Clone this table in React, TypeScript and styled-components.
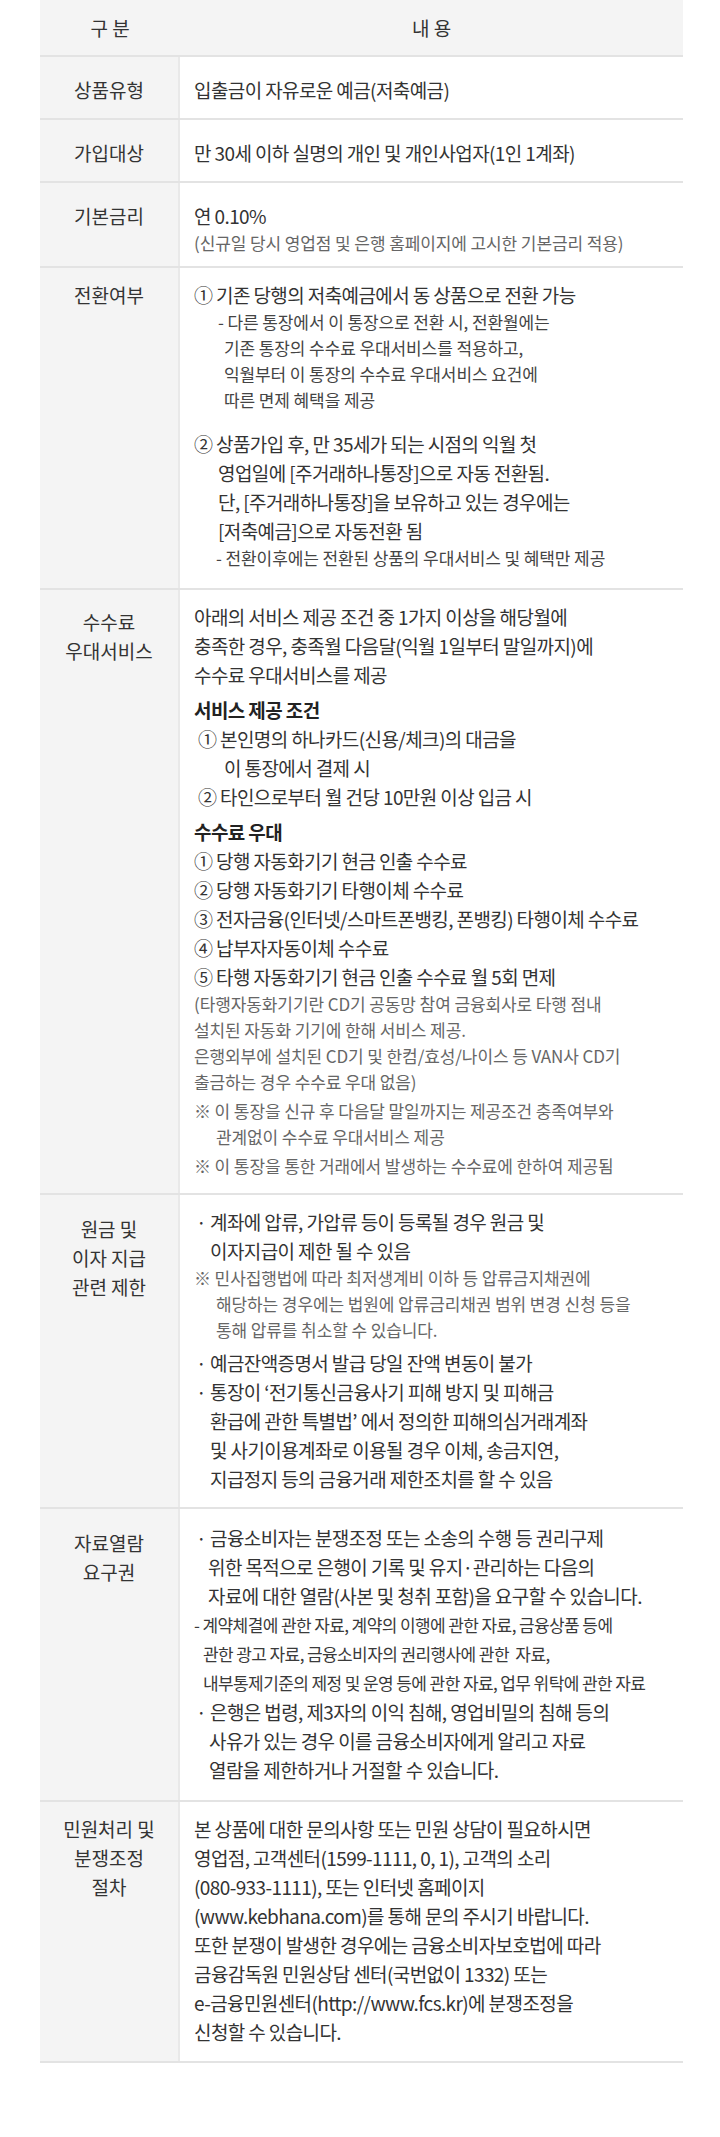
import React from 'react'
import styled, { createGlobalStyle } from 'styled-components'

const GlobalStyle = createGlobalStyle`
  html, body {
    margin: 0;
    padding: 0;
    background: #fff;
  }
  body {
    font-family: 'Noto Sans CJK KR', 'Noto Sans', sans-serif;
    color: #333;
  }
`

const Page = styled.div`
  padding: 0 37px 60px 40px;
`

const Table = styled.div`
  display: flex;
  flex-direction: column;
`

const Row = styled.div<{ $head?: boolean }>`
  display: grid;
  grid-template-columns: 140px 1fr;
  border-bottom: 2px solid #e3e3e3;
  background: ${(p) => (p.$head ? '#f4f4f4' : '#fff')};
`

const Label = styled.div<{ $top: number }>`
  box-sizing: border-box;
  background: #f4f4f4;
  border-right: 2px solid #e9e9e9;
  padding: ${(p) => p.$top}px 2px 0;
  text-align: center;
  font-size: 19px;
  line-height: 29px;
  color: #333;
  white-space: nowrap;
`

const HeadCell = styled.div`
  padding: 13px 0;
  text-align: center;
  font-size: 19px;
  line-height: 29px;
  color: #333;
`

const Cell = styled.div<{ $top: number; $bottom: number }>`
  padding: ${(p) => `${p.$top}px 4px ${p.$bottom}px 14px`};
  min-width: 0;
`

const Line = styled.div<{ $indent?: number; $gap?: number }>`
  font-size: 19px;
  line-height: 29px;
  letter-spacing: -0.6px;
  color: #333;
  white-space: nowrap;
  padding-left: ${(p) => p.$indent ?? 0}px;
  margin-top: ${(p) => p.$gap ?? 0}px;
`

const SubLine = styled(Line)`
  font-size: 17px;
  line-height: 26px;
  letter-spacing: -0.1px;
  color: #444;
`

const Note = styled(Line)`
  font-size: 17px;
  line-height: 26px;
  letter-spacing: -0.1px;
  color: #666;
`

const TightLine = styled(Line)`
  font-size: 17px;
  letter-spacing: -0.6px;
  color: #3a3a3a;
`

const Heading = styled(Line)`
  font-weight: 700;
  color: #222;
`

const Dot = styled.span`
  display: inline-block;
  width: 16px;
  padding-left: 2px;
  box-sizing: border-box;
`

const Bullet = ({ children, gap }: { children: React.ReactNode; gap?: number }) => (
  <Line $gap={gap}>
    <Dot>·</Dot>
    {children}
  </Line>
)

const App: React.FC = () => {
  return (
    <>
      <GlobalStyle />
      <Page>
        <Table>
          <Row $head>
            <HeadCell>구 분</HeadCell>
            <HeadCell>내 용</HeadCell>
          </Row>

          <Row>
            <Label $top={18}>상품유형</Label>
            <Cell $top={18} $bottom={14}>
              <Line>입출금이 자유로운 예금(저축예금)</Line>
            </Cell>
          </Row>

          <Row>
            <Label $top={18}>가입대상</Label>
            <Cell $top={18} $bottom={14}>
              <Line>만 30세 이하 실명의 개인 및 개인사업자(1인 1계좌)</Line>
            </Cell>
          </Row>

          <Row>
            <Label $top={18}>기본금리</Label>
            <Cell $top={18} $bottom={10}>
              <Line>연 0.10%</Line>
              <Note>(신규일 당시 영업점 및 은행 홈페이지에 고시한 기본금리 적용)</Note>
            </Cell>
          </Row>

          <Row>
            <Label $top={12}>전환여부</Label>
            <Cell $top={12} $bottom={17}>
              <Line>① 기존 당행의 저축예금에서 동 상품으로 전환 가능</Line>
              <SubLine $indent={24}>- 다른 통장에서 이 통장으로 전환 시, 전환월에는</SubLine>
              <SubLine $indent={30}>기존 통장의 수수료 우대서비스를 적용하고,</SubLine>
              <SubLine $indent={30}>익월부터 이 통장의 수수료 우대서비스 요건에</SubLine>
              <SubLine $indent={30}>따른 면제 혜택을 제공</SubLine>
              <Line $gap={16}>② 상품가입 후, 만 35세가 되는 시점의 익월 첫</Line>
              <Line $indent={24}>영업일에 [주거래하나통장]으로 자동 전환됨.</Line>
              <Line $indent={24}>단, [주거래하나통장]을 보유하고 있는 경우에는</Line>
              <Line $indent={24}>[저축예금]으로 자동전환 됨</Line>
              <SubLine $indent={22}>- 전환이후에는 전환된 상품의 우대서비스 및 혜택만 제공</SubLine>
            </Cell>
          </Row>

          <Row>
            <Label $top={17}>
              수수료
              <br />
              우대서비스
            </Label>
            <Cell $top={12} $bottom={14}>
              <Line>아래의 서비스 제공 조건 중 1가지 이상을 해당월에</Line>
              <Line>충족한 경우, 충족월 다음달(익월 1일부터 말일까지)에</Line>
              <Line>수수료 우대서비스를 제공</Line>
              <Heading $gap={6}>서비스 제공 조건</Heading>
              <Line $indent={4}>① 본인명의 하나카드(신용/체크)의 대금을</Line>
              <Line $indent={30}>이 통장에서 결제 시</Line>
              <Line $indent={4}>② 타인으로부터 월 건당 10만원 이상 입금 시</Line>
              <Heading $gap={6}>수수료 우대</Heading>
              <Line>① 당행 자동화기기 현금 인출 수수료</Line>
              <Line>② 당행 자동화기기 타행이체 수수료</Line>
              <Line>③ 전자금융(인터넷/스마트폰뱅킹, 폰뱅킹) 타행이체 수수료</Line>
              <Line>④ 납부자자동이체 수수료</Line>
              <Line>⑤ 타행 자동화기기 현금 인출 수수료 월 5회 면제</Line>
              <Note>(타행자동화기기란 CD기 공동망 참여 금융회사로 타행 점내</Note>
              <Note>설치된 자동화 기기에 한해 서비스 제공.</Note>
              <Note>은행외부에 설치된 CD기 및 한컴/효성/나이스 등 VAN사 CD기</Note>
              <Note>출금하는 경우 수수료 우대 없음)</Note>
              <Note $gap={3}>※ 이 통장을 신규 후 다음달 말일까지는 제공조건 충족여부와</Note>
              <Note $indent={22}>관계없이 수수료 우대서비스 제공</Note>
              <Note $gap={3}>※ 이 통장을 통한 거래에서 발생하는 수수료에 한하여 제공됨</Note>
            </Cell>
          </Row>

          <Row>
            <Label $top={19}>
              원금 및
              <br />
              이자 지급
              <br />
              관련 제한
            </Label>
            <Cell $top={12} $bottom={14}>
              <Bullet>계좌에 압류, 가압류 등이 등록될 경우 원금 및</Bullet>
              <Line $indent={16}>이자지급이 제한 될 수 있음</Line>
              <Note>※ 민사집행법에 따라 최저생계비 이하 등 압류금지채권에</Note>
              <Note $indent={22}>해당하는 경우에는 법원에 압류금리채권 범위 변경 신청 등을</Note>
              <Note $indent={22}>통해 압류를 취소할 수 있습니다.</Note>
              <Bullet gap={5}>예금잔액증명서 발급 당일 잔액 변동이 불가</Bullet>
              <Bullet>통장이 ‘전기통신금융사기 피해 방지 및 피해금</Bullet>
              <Line $indent={16}>환급에 관한 특별법’ 에서 정의한 피해의심거래계좌</Line>
              <Line $indent={16}>및 사기이용계좌로 이용될 경우 이체, 송금지연,</Line>
              <Line $indent={16}>지급정지 등의 금융거래 제한조치를 할 수 있음</Line>
            </Cell>
          </Row>

          <Row>
            <Label $top={19}>
              자료열람
              <br />
              요구권
            </Label>
            <Cell $top={14} $bottom={16}>
              <Bullet>금융소비자는 분쟁조정 또는 소송의 수행 등 권리구제</Bullet>
              <Line $indent={14}>위한 목적으로 은행이 기록 및 유지·관리하는 다음의</Line>
              <Line $indent={14}>자료에 대한 열람(사본 및 청취 포함)을 요구할 수 있습니다.</Line>
              <TightLine>- 계약체결에 관한 자료, 계약의 이행에 관한 자료, 금융상품 등에</TightLine>
              <TightLine $indent={9}>관한 광고 자료, 금융소비자의 권리행사에 관한&nbsp; 자료,</TightLine>
              <TightLine $indent={9}>내부통제기준의 제정 및 운영 등에 관한 자료, 업무 위탁에 관한 자료</TightLine>
              <Bullet>은행은 법령, 제3자의 이익 침해, 영업비밀의 침해 등의</Bullet>
              <Line $indent={15}>사유가 있는 경우 이를 금융소비자에게 알리고 자료</Line>
              <Line $indent={15}>열람을 제한하거나 거절할 수 있습니다.</Line>
            </Cell>
          </Row>

          <Row>
            <Label $top={12}>
              민원처리 및
              <br />
              분쟁조정
              <br />
              절차
            </Label>
            <Cell $top={12} $bottom={15}>
              <Line>본 상품에 대한 문의사항 또는 민원 상담이 필요하시면</Line>
              <Line>영업점, 고객센터(1599-1111, 0, 1), 고객의 소리</Line>
              <Line>(080-933-1111), 또는 인터넷 홈페이지</Line>
              <Line>(www.kebhana.com)를 통해 문의 주시기 바랍니다.</Line>
              <Line>또한 분쟁이 발생한 경우에는 금융소비자보호법에 따라</Line>
              <Line>금융감독원 민원상담 센터(국번없이 1332) 또는</Line>
              <Line>e-금융민원센터(http://www.fcs.kr)에 분쟁조정을</Line>
              <Line>신청할 수 있습니다.</Line>
            </Cell>
          </Row>
        </Table>
      </Page>
    </>
  )
}

export default App
